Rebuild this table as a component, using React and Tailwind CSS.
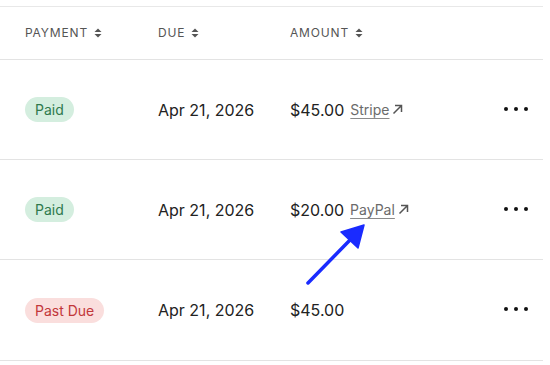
import React from "react";

const filas = [
  { estado: "Paid", fecha: "Apr 21, 2026", monto: "$45.00", via: "Stripe" },
  { estado: "Paid", fecha: "Apr 21, 2026", monto: "$20.00", via: "PayPal" },
  { estado: "Past Due", fecha: "Apr 21, 2026", monto: "$45.00", via: null },
];

const SortIcon = () => (
  <svg width="8" height="10" viewBox="0 0 8 10" className="ml-[6px] text-[#555]">
    <path d="M4 0.5 L7.5 4 H0.5 Z" fill="currentColor" />
    <path d="M4 9.5 L7.5 6 H0.5 Z" fill="currentColor" />
  </svg>
);

const ExternalIcon = () => (
  <svg width="11" height="11" viewBox="0 0 11 11" className="ml-[3px] text-[#555]">
    <path
      d="M1.5 9.5 L9 2 M3 1.5 H9.5 V8"
      fill="none"
      stroke="currentColor"
      strokeWidth="1.5"
    />
  </svg>
);

const Badge = ({ estado }) =>
  estado === "Paid" ? (
    <span className="inline-flex h-[25px] items-center rounded-full bg-[#d4eedf] px-[10px] text-[14px] text-[#2f7a4d]">
      {estado}
    </span>
  ) : (
    <span className="inline-flex h-[25px] items-center rounded-full bg-[#fadedd] px-[10px] text-[14px] text-[#c2373a]">
      {estado}
    </span>
  );

export default function App() {
  return (
    <div className="relative h-[365px] w-[550px] overflow-hidden bg-white pt-[6px] font-['Inter',sans-serif] font-normal text-[#222]">
      <div className="w-[543px] border-t border-[#e8e8e8]">
        {/* Encabezado */}
        <div className="flex h-[53px] items-center border-b border-[#e3e3e3] pl-[25px] text-[12px] font-normal uppercase tracking-[0.07em] text-[#555]">
          <div className="flex w-[133px] items-center">
            Payment <SortIcon />
          </div>
          <div className="flex w-[132px] items-center">
            Due <SortIcon />
          </div>
          <div className="flex items-center">
            Amount <SortIcon />
          </div>
        </div>

        {filas.map((f, i) => (
          <div
            key={i}
            className="flex h-[100px] items-center border-b border-[#e3e3e3] pl-[25px] pr-[15px] last:h-[101px]"
          >
            <div className="w-[133px]">
              <Badge estado={f.estado} />
            </div>
            <div className="w-[132px] text-[16px]">{f.fecha}</div>
            <div className="flex flex-1 items-center text-[16px]">
              {f.monto}
              {f.via && (
                <span className="ml-[6px] flex items-center text-[14px] text-[#6b6b6b]">
                  <span className="underline decoration-[#8a8a8a] underline-offset-[3px]">{f.via}</span>
                  <ExternalIcon />
                </span>
              )}
            </div>
            <div className="flex items-center gap-[6px] pb-[2px]">
              <span className="h-[4px] w-[4px] rounded-full bg-[#111]" />
              <span className="h-[4px] w-[4px] rounded-full bg-[#111]" />
              <span className="h-[4px] w-[4px] rounded-full bg-[#111]" />
            </div>
          </div>
        ))}
      </div>

      {/* Flecha de anotación */}
      <svg
        className="pointer-events-none absolute left-0 top-0"
        width="550"
        height="365"
        viewBox="0 0 550 365"
      >
        <line x1="308" y1="283" x2="350" y2="240" stroke="#1a2bff" strokeWidth="3.5" strokeLinecap="round" />
        <polygon points="364,225 341,232 358,248" fill="#1a2bff" stroke="#1a2bff" strokeWidth="1.5" strokeLinejoin="round" />
      </svg>
    </div>
  );
}
